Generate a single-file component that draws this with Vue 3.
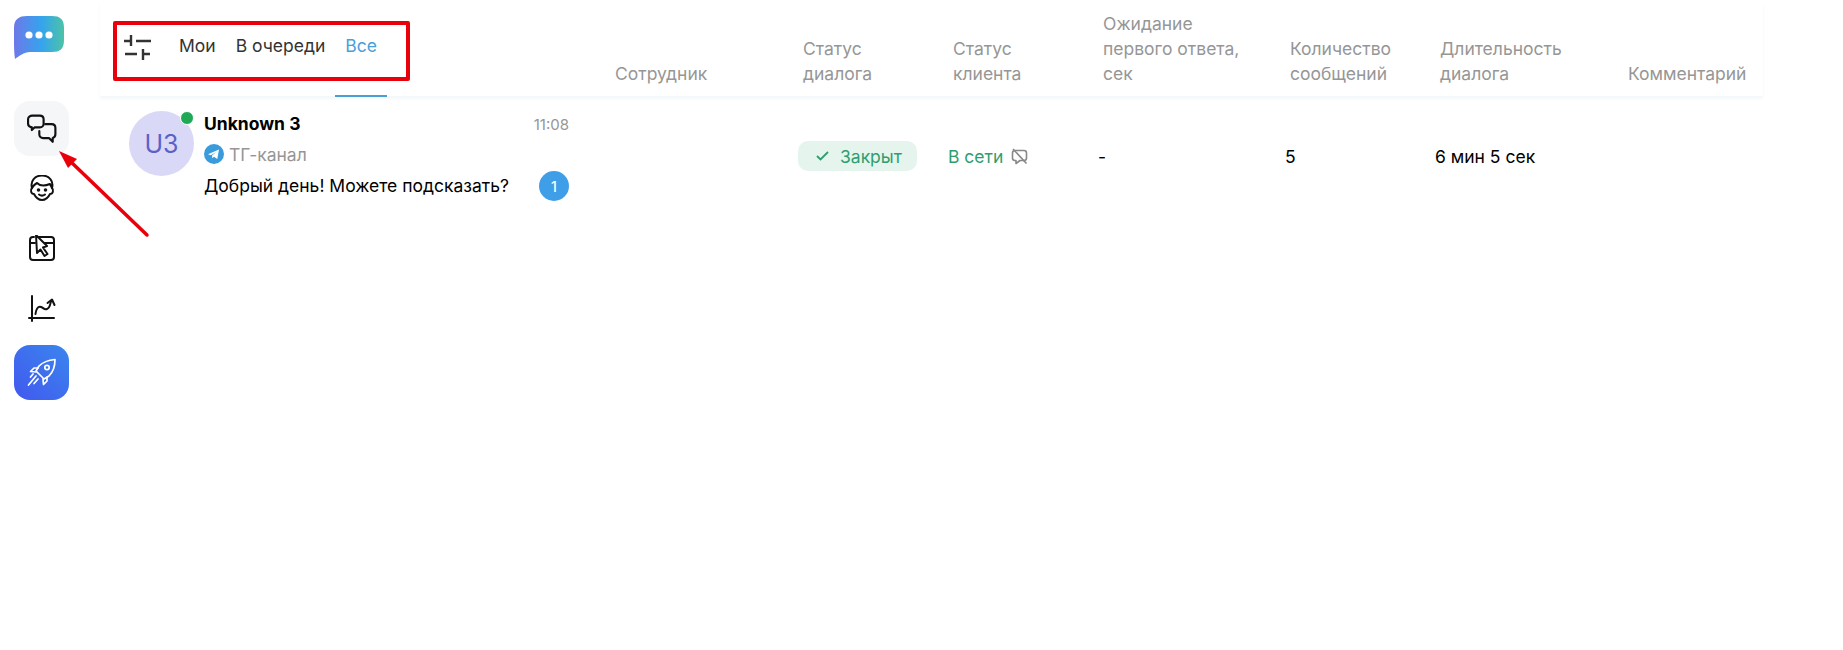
<script setup>
const columns = ["Сотрудник", "Статус\nдиалога", "Статус\nклиента", "Ожидание\nпервого ответа,\nсек", "Количество\nсообщений", "Длительность\nдиалога", "Комментарий"];
</script>

<template>
  <div class="page">
    <aside class="sidebar">
      <svg class="logo" width="52" height="44" viewBox="0 0 52 44">
        <defs>
          <linearGradient id="logoGrad" x1="0" y1="0" x2="1" y2="0">
            <stop offset="0" stop-color="#6d78e8" />
            <stop offset="0.55" stop-color="#35a4ee" />
            <stop offset="1" stop-color="#4cc3a6" />
          </linearGradient>
        </defs>
        <path d="M13 0H38C46 0 50 3 50 12V24C50 33 46 36 38 36H16C10 36 5 40 1 43C0 37 0 30 0 24V12C0 3 5 0 13 0Z" fill="url(#logoGrad)" />
        <circle cx="15" cy="19" r="3.6" fill="#fff" />
        <circle cx="25" cy="19" r="3.6" fill="#fff" />
        <circle cx="35" cy="19" r="3.6" fill="#fff" />
      </svg>
      <nav class="menu">
        <div class="menu-item active">
          <svg width="30" height="30" viewBox="0 0 28 28" fill="none" stroke="#111" stroke-width="2" stroke-linejoin="round" stroke-linecap="round">
            <path d="M5 1.500H12C14.500 1.500 15.500 3 15.500 5V9C15.500 11 14 12.500 12 12.500H7L4.500 15V12.500C2.500 12 1 11 1 9V5C1 3 3 1.500 5 1.500Z" />
            <path d="M17 9.500H23C25.500 9.500 26.500 11 26.500 13V19C26.500 21 25.500 22 24 22.500V26L20.500 22.500H15C13 22.500 11.500 21 11.500 19V16" />
          </svg>
        </div>
        <div class="menu-item">
          <svg width="26" height="28" viewBox="0 1 26 28" fill="none" stroke="#111" stroke-width="2" stroke-linecap="round" stroke-linejoin="round">
            <path d="M3 14C1 16 2 20 5 20C7 24 10 26 13 26C16 26 19 24 21 20C24 20 25 16 23 14" />
            <path d="M3 14C1 7 6 1.500 13 1.500C20 1.500 25 7 23 14L21 10C16 12 11 12 8 9C6 10 4 12 3 14Z" />
            <circle cx="9.500" cy="16" r="0.800" fill="#111" />
            <circle cx="16.500" cy="16" r="0.800" fill="#111" />
            <path d="M10 20.500C12 22 14 22 16 20.500" />
          </svg>
        </div>
        <div class="menu-item">
          <svg width="26" height="28" viewBox="0 1 26 28" fill="none" stroke="#111" stroke-width="2" stroke-linecap="round" stroke-linejoin="round">
            <path d="M9 3H22C23.500 3 25 4 25 6V23C25 25 23.500 26 22 26H4C2.500 26 1 25 1 23V6C1 4 2.500 3 4 3H5" />
            <path d="M1 9H6M16 9H25" />
            <path d="M7 1L18 12L14 13.500L18.500 20L15.500 22L11.500 15.500L8 19Z" fill="#fff" />
          </svg>
        </div>
        <div class="menu-item">
          <svg width="28" height="28" viewBox="0 0 28 28" fill="none" stroke="#111" stroke-width="2" stroke-linecap="round" stroke-linejoin="round">
            <path d="M4 1V26M1 23H26" />
            <path d="M7.500 19C8 14 10 11 13 12C16 13 16 15 19 14C22 13 22 10 23 6" />
            <path d="M19.500 8L24 4.500L26.500 10" />
          </svg>
        </div>
        <div class="menu-item rocket">
          <svg width="30" height="30" viewBox="0 0 30 30" fill="none" stroke="#fff" stroke-width="1.700" stroke-linecap="round" stroke-linejoin="round">
            <path d="M12 8C16 4 22 2 28 1.500C28 8 26 14 22 18L17 21L9 13Z" />
            <circle cx="20" cy="9.500" r="2.200" />
            <path d="M11 10H7L3.500 13.500L9 14M20 19V23L16.500 26.500L16 21" />
            <path d="M9 18L1.500 27M11 21L7 25.500M6 16L3.500 19" />
          </svg>
        </div>
      </nav>
    </aside>

    <main class="content">
      <header class="head grid">
        <div class="tabs">
          <svg class="filter" width="28" height="28" viewBox="0 0 28 28" fill="none" stroke="#333" stroke-width="2.400">
            <path d="M1 7H8M8 1V12M13 7H28M2 20H14M20 15V26M20 20H27" />
          </svg>
          <div class="tab">Мои</div>
          <div class="tab">В очереди</div>
          <div class="tab current">Все</div>
        </div>
        <div v-for="col in columns" :key="col" class="th">{{ col }}</div>
      </header>

      <section class="row grid">
        <div class="dialog">
          <div class="avatar">U3<span class="dot"></span></div>
          <div class="info">
            <div class="line">
              <span class="name">Unknown 3</span>
              <span class="time">11:08</span>
            </div>
            <div class="channel">
              <svg width="20" height="20" viewBox="0 0 20 20">
                <circle cx="10" cy="10" r="10" fill="#3a9bdc" />
                <path d="M4 10.200L15 5.500L13.300 15L10 12.700L8.300 14.300L8 11.500L12.500 8L6.800 11.200Z" fill="#fff" />
              </svg>
              <span>ТГ-канал</span>
            </div>
            <div class="line">
              <span class="message">Добрый день! Можете подсказать?</span>
              <span class="badge">1</span>
            </div>
          </div>
        </div>
        <div></div>
        <div class="cell">
          <span class="pill">
            <svg width="13" height="10" viewBox="0 0 13 10" fill="none" stroke="#2f9e6e" stroke-width="1.800">
              <path d="M1 5L4.500 8.500L12 1" />
            </svg>
            Закрыт
          </span>
        </div>
        <div class="cell online">
          В сети
          <svg width="17" height="17" viewBox="0 0 17 17" fill="none" stroke="#888" stroke-width="1.600" stroke-linejoin="round">
            <path d="M4 2.500H13C14.500 2.500 15.500 3.500 15.500 5V10C15.500 11.500 14.500 12.500 13 12.500H9L5 15.500V12.500H4C2.500 12.500 1.500 11.500 1.500 10V5C1.500 3.500 2.500 2.500 4 2.500Z" />
            <path d="M2 1L15.500 15.500" />
          </svg>
        </div>
        <div class="cell">-</div>
        <div class="cell">5</div>
        <div class="cell">6 мин 5 сек</div>
        <div class="cell"></div>
      </section>
    </main>

    <div class="red-frame"></div>
    <svg class="red-arrow" width="110" height="110" viewBox="0 0 110 110">
      <path d="M91 87L14 13" stroke="#e8000b" stroke-width="3.500" stroke-linecap="round" />
      <path d="M3 3L21 11L12 20Z" fill="#e8000b" />
    </svg>
  </div>
</template>

<style>
body {
  background: #fff;
}
</style>

<style scoped>
.page {
  position: relative;
  display: flex;
  width: 1843px;
  height: 650px;
  overflow: hidden;
  background: #fff;
  font-family: Inter, "Noto Sans", sans-serif;
  font-size: 17.5px;
  color: #000;
}

.sidebar {
  width: 100px;
  flex-shrink: 0;
  padding: 16px 0 0 14px;
  box-sizing: border-box;
}

.logo {
  display: block;
}

.menu {
  display: flex;
  flex-direction: column;
  gap: 5px;
  margin-top: 41px;
}

.menu-item {
  display: flex;
  align-items: center;
  justify-content: center;
  width: 55px;
  height: 55px;
  border-radius: 16px;
}

.menu-item.active {
  background: #f5f6f8;
}

.menu-item.rocket {
  margin-top: 4px;
  background: linear-gradient(45deg, #4258ee, #3a86ee);
}

.content {
  width: 1663px;
}

.grid {
  display: grid;
  grid-template-columns: 510px 188px 150px 150px 187px 150px 188px 1fr;
}

.head {
  height: 96px;
  align-items: end;
  padding-bottom: 10px;
  box-sizing: border-box;
  box-shadow: 0 3px 3px #f4f8fb;
}

.tabs {
  position: relative;
  display: flex;
  align-self: start;
  height: 96px;
  margin-bottom: -10px;
  padding: 34px 0 0 23px;
  box-sizing: border-box;
}

.filter {
  margin-right: 18px;
}

.tab {
  position: relative;
  padding: 0 10px;
  height: 61px;
  line-height: 24px;
  color: #333;
}

.tab.current {
  color: #4a9fd8;
  border-bottom: 2px solid #4a9fd8;
}

.th {
  padding-left: 5px;
  line-height: 25px;
  color: #969696;
  white-space: pre-line;
}

.row {
  height: 90px;
  align-items: center;
  margin-top: 4px;
}

.dialog {
  display: flex;
  gap: 10px;
  padding-left: 29px;
  height: 90px;
  box-sizing: border-box;
  padding-top: 11px;
}

.avatar {
  position: relative;
  display: flex;
  align-items: center;
  justify-content: center;
  width: 65px;
  height: 65px;
  flex-shrink: 0;
  border-radius: 50%;
  background: #d9d9f7;
  color: #5a62c8;
  font-size: 25px;
}

.dot {
  position: absolute;
  top: 0;
  right: 0;
  width: 12px;
  height: 12px;
  border-radius: 50%;
  background: #1fa855;
  border: 1px solid #fff;
}

.info {
  width: 365px;
}

.line {
  display: flex;
  justify-content: space-between;
  align-items: center;
}

.name {
  font-weight: 700;
  line-height: 26px;
}

.time {
  color: #969696;
  font-size: 15px;
}

.channel {
  display: flex;
  align-items: center;
  gap: 5px;
  height: 30px;
  margin-top: 2px;
  color: #969696;
}

.message {
  line-height: 30px;
  margin-top: 2px;
}

.badge {
  display: flex;
  align-items: center;
  justify-content: center;
  width: 30px;
  height: 30px;
  margin-top: 2px;
  border-radius: 50%;
  background: #3e9fe8;
  color: #fff;
  font-size: 14px;
  font-weight: 500;
}

.cell {
  display: flex;
  align-items: center;
  gap: 8px;
  margin-top: 22px;
}

.pill {
  display: flex;
  align-items: center;
  gap: 11px;
  height: 30px;
  padding: 0 15px 0 18px;
  border-radius: 10px;
  background: #e6f4ee;
  color: #2f9e6e;
}

.online {
  color: #2f9e6e;
}

.red-frame {
  position: absolute;
  left: 113px;
  top: 21px;
  width: 297px;
  height: 60px;
  box-sizing: border-box;
  border: 4px solid #e8000b;
  border-radius: 2px;
}

.red-arrow {
  position: absolute;
  left: 56px;
  top: 148px;
}
</style>
